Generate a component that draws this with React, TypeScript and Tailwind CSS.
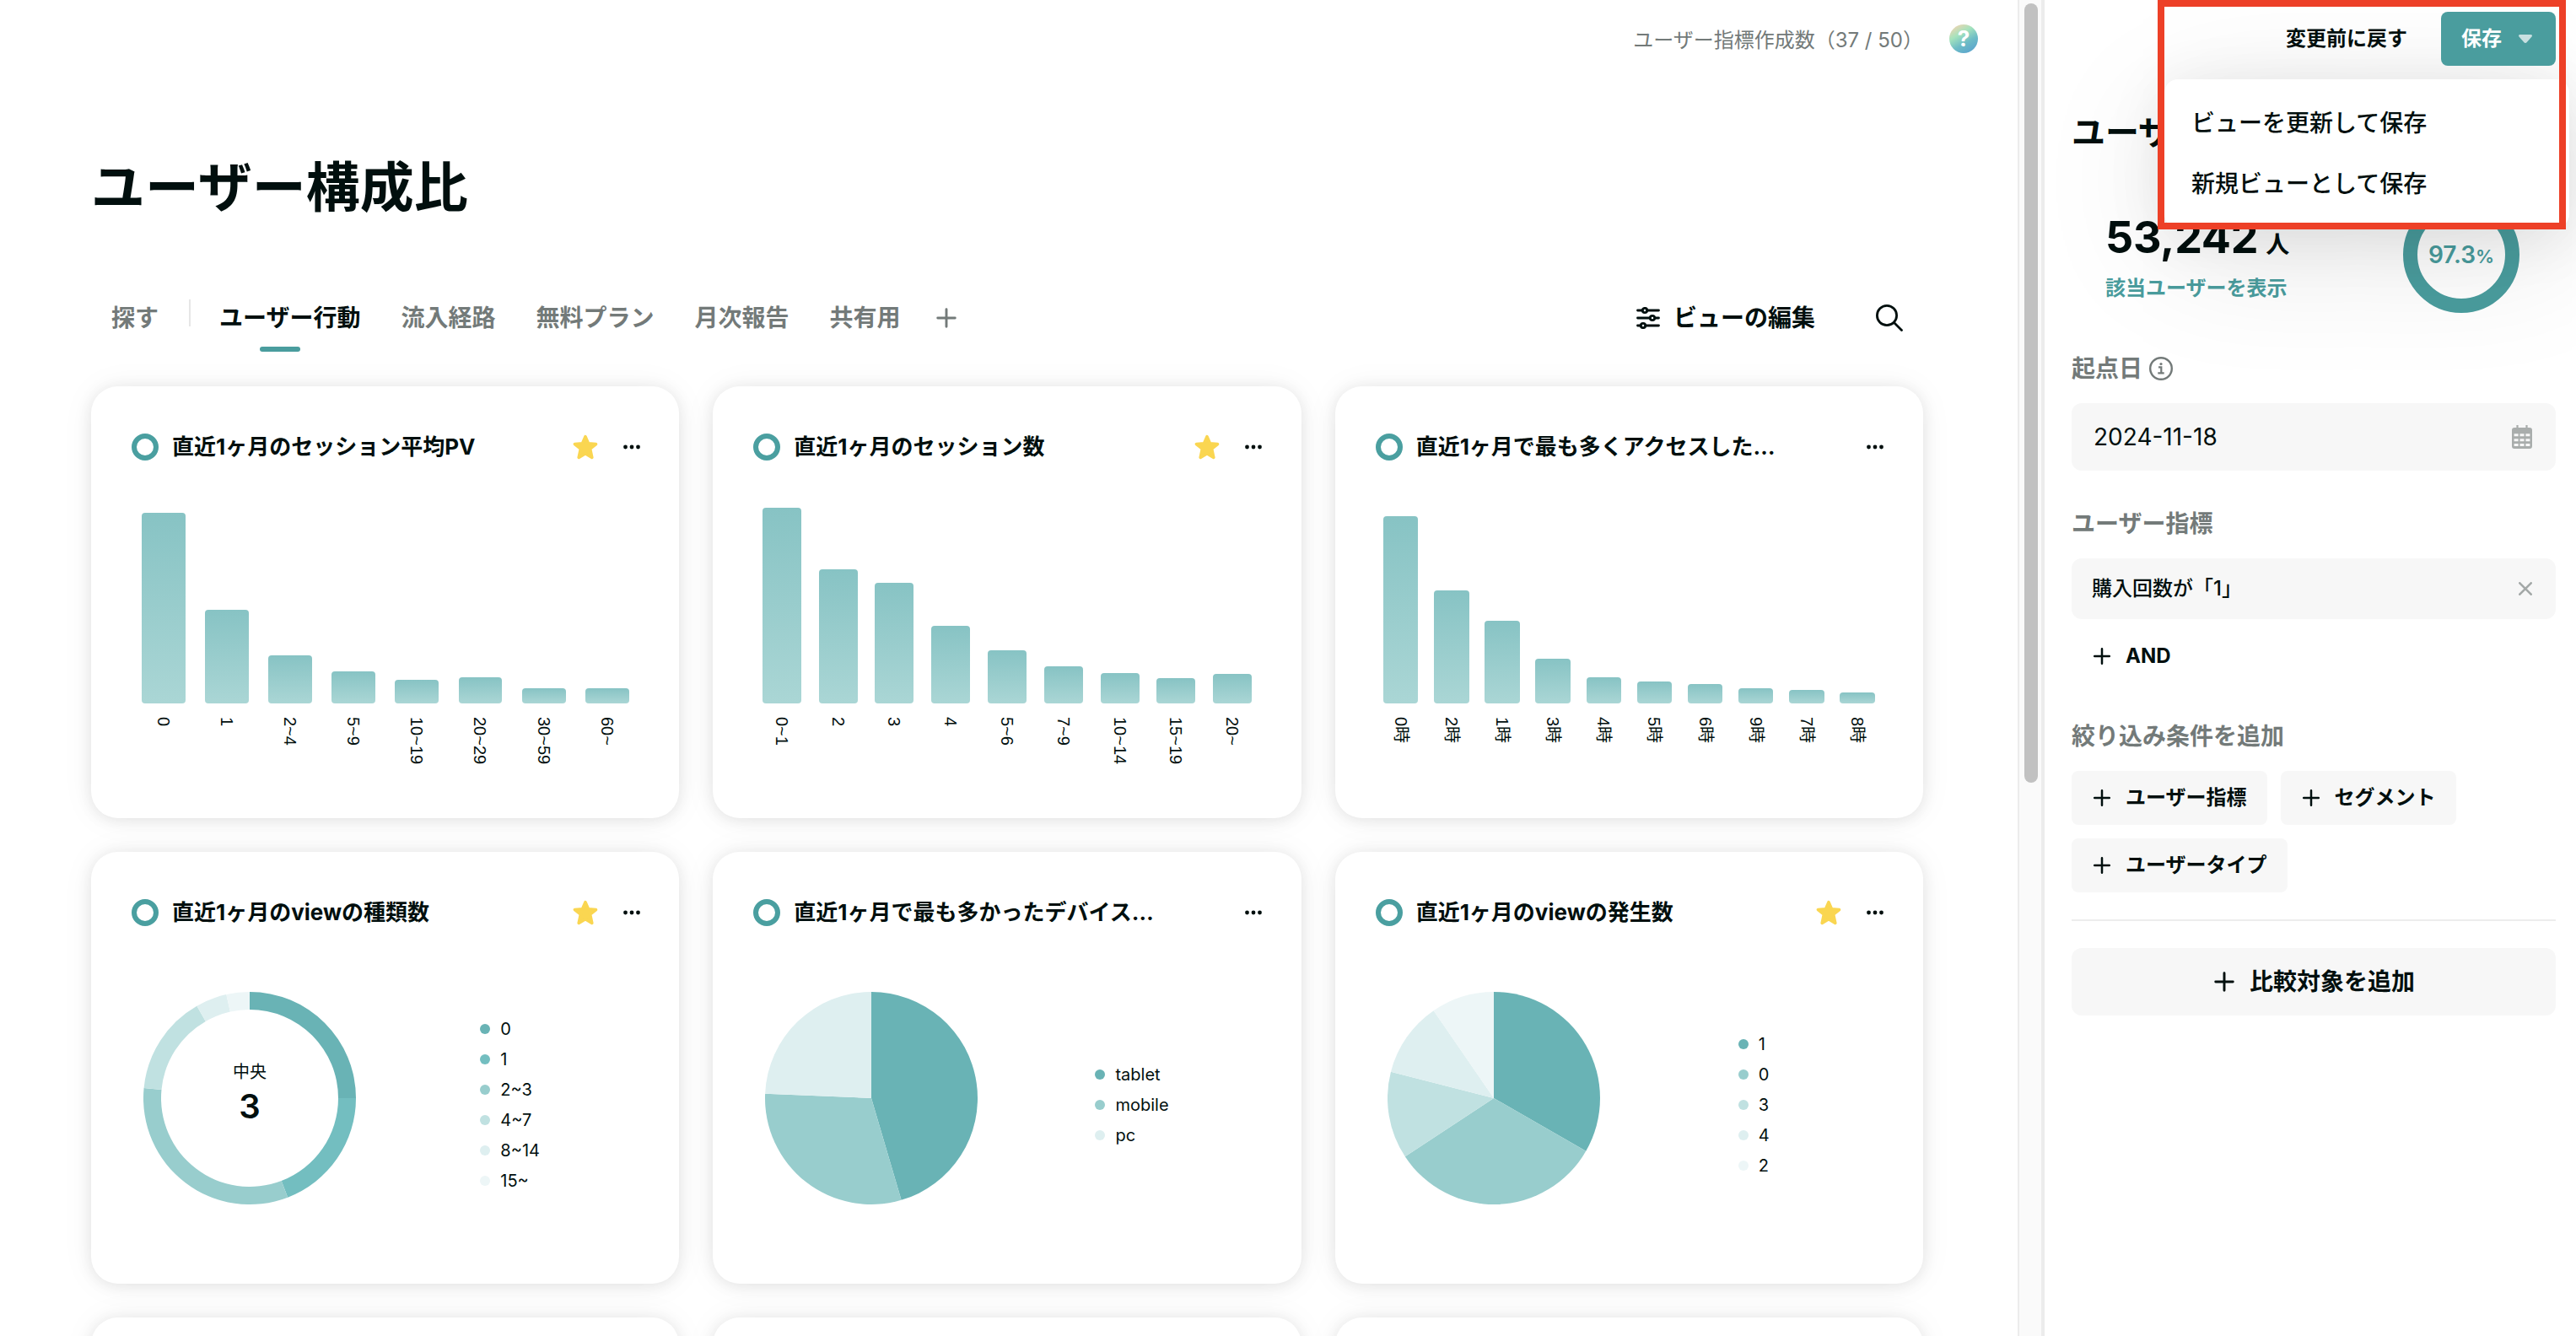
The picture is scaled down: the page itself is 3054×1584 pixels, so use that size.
import type { ReactNode } from "react";

interface Bar {
  label: string;
  height: number;
}

interface Slice {
  label: string;
  to: number;
  color: string;
}

interface MetricCardProps {
  title: string;
  starred?: boolean;
  children: ReactNode;
}

const sessionPv: Bar[] = [
  { label: "0", height: 226 },
  { label: "1", height: 111 },
  { label: "2~4", height: 57 },
  { label: "5~9", height: 38 },
  { label: "10~19", height: 28 },
  { label: "20~29", height: 31 },
  { label: "30~59", height: 18 },
  { label: "60~", height: 18 },
];

const sessionCount: Bar[] = [
  { label: "0~1", height: 232 },
  { label: "2", height: 159 },
  { label: "3", height: 143 },
  { label: "4", height: 92 },
  { label: "5~6", height: 63 },
  { label: "7~9", height: 44 },
  { label: "10~14", height: 36 },
  { label: "15~19", height: 30 },
  { label: "20~", height: 35 },
];

const accessHour: Bar[] = [
  { label: "0時", height: 222 },
  { label: "2時", height: 134 },
  { label: "1時", height: 98 },
  { label: "3時", height: 53 },
  { label: "4時", height: 31 },
  { label: "5時", height: 26 },
  { label: "6時", height: 23 },
  { label: "9時", height: 18 },
  { label: "7時", height: 16 },
  { label: "8時", height: 13 },
];

// `to` is the end angle of each slice, clockwise from 12 o'clock
const viewKinds: Slice[] = [
  { label: "0", to: 90, color: "#69b3b5" },
  { label: "1", to: 159, color: "#73bec0" },
  { label: "2~3", to: 275.5, color: "#98cdcd" },
  { label: "4~7", to: 330.2, color: "#c0e1e1" },
  { label: "8~14", to: 347.3, color: "#deeff0" },
  { label: "15~", to: 360, color: "#edf6f7" },
];

const devices: Slice[] = [
  { label: "tablet", to: 163.6, color: "#69b3b5" },
  { label: "mobile", to: 272.4, color: "#98cdcd" },
  { label: "pc", to: 360, color: "#deeff0" },
];

const viewCount: Slice[] = [
  { label: "1", to: 119.9, color: "#69b3b5" },
  { label: "0", to: 236.6, color: "#98cdcd" },
  { label: "3", to: 284.4, color: "#c0e1e1" },
  { label: "4", to: 325.5, color: "#deeff0" },
  { label: "2", to: 360, color: "#edf6f7" },
];

const tabs = ["流入経路", "無料プラン", "月次報告", "共有用"];

const Plus = ({ className }: { className: string }) => (
  <svg viewBox="0 0 24 24" className={className} fill="none" stroke="currentColor" strokeWidth="2.5" strokeLinecap="round">
    <path d="M12 3.2v17.6M3.2 12h17.6" />
  </svg>
);

const Star = () => (
  <svg viewBox="0 0 30 30" className="h-[30px] w-[30px]" fill="#fad651" stroke="#fad651" strokeWidth="3.6" strokeLinejoin="round">
    <path d="M15 2.6l3.5 8.2 9 .7-6.9 5.7 2.2 10.2L15 22.7l-7.8 4.7 2.2-10.2-6.9-5.7 9-.7z" />
  </svg>
);

const MetricCard = ({ title, starred, children }: MetricCardProps) => (
  <section className="flex h-[512px] flex-col rounded-[32px] bg-white px-12 pt-[52px] shadow-[0_2px_18px_rgba(0,0,0,0.09),0_1px_40px_rgba(0,0,0,0.05)]">
    <div className="flex h-10 items-center">
      <span className="h-8 w-8 shrink-0 rounded-full border-[6.5px] border-[#4a9fa0]" />
      <h2 className="ml-4 flex-1 truncate text-[26px] leading-10 font-bold">{title}</h2>
      {starred && <Star />}
      <svg viewBox="0 0 20 6" className="mr-[-1.5px] ml-[30px] h-1.5 w-5" fill="currentColor">
        <circle cx="2.5" cy="3" r="2.4" />
        <circle cx="10" cy="3" r="2.4" />
        <circle cx="17.5" cy="3" r="2.4" />
      </svg>
    </div>
    {children}
  </section>
);

const BarChart = ({ bars }: { bars: Bar[] }) => (
  <div className="mt-[52px] flex">
    {bars.map((bar) => (
      <div key={bar.label} className="flex flex-1 flex-col items-center">
        <div className="flex h-[232px] w-[69%] items-end">
          <div
            className="w-full rounded-[4px] bg-linear-to-b from-[#87c3c4] to-[#aad6d5]"
            style={{ height: bar.height }}
          />
        </div>
        <span className="mt-4 font-['Liberation_Sans','Noto_Sans_CJK_JP',sans-serif] text-[20px] leading-6 [text-orientation:sideways] [writing-mode:vertical-rl]">
          {bar.label}
        </span>
      </div>
    ))}
  </div>
);

const point = (angle: number, r: number) => {
  const rad = (angle * Math.PI) / 180;
  return `${126 + r * Math.sin(rad)} ${126 - r * Math.cos(rad)}`;
};

const slicePath = (from: number, to: number, inner: number) => {
  const large = to - from > 180 ? 1 : 0;
  return `M${point(from, inner)}L${point(from, 126)}A126 126 0 ${large} 1 ${point(to, 126)}L${point(to, inner)}A${inner} ${inner} 0 ${large} 0 ${point(from, inner)}Z`;
};

const PieChart = ({ slices, inner = 0, children }: { slices: Slice[]; inner?: number; children?: ReactNode }) => (
  <div className="mt-[74px] flex h-[252px] pl-[14px]">
    <div className="relative h-[252px] w-[252px] shrink-0">
      <svg viewBox="0 0 252 252" className="h-full w-full">
        {slices.map((slice, i) => (
          <path key={slice.label} d={slicePath(i ? slices[i - 1].to : 0, slice.to, inner)} fill={slice.color} />
        ))}
      </svg>
      {children}
    </div>
    <div className="ml-[30px] flex flex-1 items-center justify-center pt-4">
      <ul>
        {slices.map((slice) => (
          <li key={slice.label} className="flex h-9 items-center gap-3 text-[20px] leading-9">
            <span className="h-3 w-3 rounded-full" style={{ backgroundColor: slice.color }} />
            {slice.label}
          </li>
        ))}
      </ul>
    </div>
  </div>
);

const AddButton = ({ label }: { label: string }) => (
  <button className="flex h-16 items-center gap-4 rounded-lg bg-[#f7f7f7] px-6 text-[24px] leading-none font-bold">
    <Plus className="h-6 w-6" />
    {label}
  </button>
);

const SideLabel = ({ children }: { children: ReactNode }) => (
  <div className="flex h-10 items-center gap-2 text-[28px] leading-10 font-bold text-[#737a79]">{children}</div>
);

const Sidebar = () => (
  <aside className="relative h-full w-[630px] shrink-0 bg-white pr-6 pl-8">
    <div className="relative z-20 flex h-[92px] items-center justify-end">
      <button className="text-[24px] font-bold">変更前に戻す</button>
      <button className="ml-10 flex h-16 w-[136px] items-center rounded-lg bg-[#4a9d9e] pl-6 text-[24px] font-bold text-white">
        保存
        <svg viewBox="0 0 16 10" className="ml-5 h-2.5 w-4" fill="#c8e0e1">
          <path d="M1.5 0h13a1.4 1.4 0 0 1 1 2.4l-5.7 6.7a2.3 2.3 0 0 1-3.6 0L.5 2.4A1.4 1.4 0 0 1 1.5 0z" />
        </svg>
      </button>
    </div>

    <h2 className="mt-[35px] text-[40px] leading-[60px] font-bold">ユーザー</h2>

    <div className="mt-[46px] flex h-[138px] items-start pr-[43px] pl-10">
      <div className="flex-1 pt-[19px]">
        <div className="flex h-[60px] items-baseline gap-[9px]">
          <span className="text-[52px] leading-[60px] font-bold tracking-[-0.3px]">53,242</span>
          <span className="text-[28px] font-bold">人</span>
        </div>
        <a className="mt-3 block text-[24px] leading-9 font-bold text-[#4a9d9e]">該当ユーザーを表示</a>
      </div>
      <div className="flex h-[138px] w-[138px] items-center justify-center rounded-full border-[17.5px] border-[#4a9d9e] text-[#4a9d9e]">
        <span className="text-[28px] font-semibold">
          97.3<span className="text-[22px]">%</span>
        </span>
      </div>
    </div>

    <div className="mt-[46px]">
      <SideLabel>
        起点日
        <svg viewBox="0 0 28 28" className="h-7 w-7" fill="none" stroke="currentColor" strokeWidth="2.4">
          <circle cx="14" cy="14" r="12.8" />
          <path d="M11 12.4h3.3v7M10.3 19.4h7.4" strokeWidth="2.2" />
          <circle cx="14" cy="8.5" r="1.6" fill="currentColor" stroke="none" />
        </svg>
      </SideLabel>
    </div>
    <div className="mt-[21px] flex h-20 items-center justify-between rounded-xl bg-[#f7f7f7] pr-7 pl-[26px] text-[28px]">
      2024-11-18
      <svg viewBox="0 0 24 28" className="h-7 w-6" fill="#a9adac">
        <path
          fillRule="evenodd"
          d="M5.4 0h2.2v3h8.8V0h2.2v3H21a3 3 0 0 1 3 3v19a3 3 0 0 1-3 3H3a3 3 0 0 1-3-3V6a3 3 0 0 1 3-3h2.4zM2.600 10.300v3h5v-3zm6.900 0v3h5v-3zm6.900 0v3h5v-3zM2.600 16.200v3h5v-3zm6.900 0v3h5v-3zm6.900 0v3h5v-3zM2.600 22.100v3h5v-3zm6.900 0v3h5v-3zm6.900 0v3h5v-3z"
        />
      </svg>
    </div>

    <div className="mt-[43px]">
      <SideLabel>ユーザー指標</SideLabel>
    </div>
    <div className="mt-[21px] flex h-[72px] items-center justify-between rounded-xl bg-[#f7f7f7] pr-7 pl-6 text-[24px] font-medium">
      購入回数が「1」
      <svg viewBox="0 0 16 16" className="h-4 w-4" fill="none" stroke="#a3a8a7" strokeWidth="2.6" strokeLinecap="round">
        <path d="M1.3 1.3l13.4 13.4M14.7 1.3L1.3 14.7" />
      </svg>
    </div>
    <button className="mt-3 flex h-16 items-center gap-4 px-6 text-[24px] font-bold">
      <Plus className="h-6 w-6" />
      AND
    </button>

    <div className="mt-[43px]">
      <SideLabel>絞り込み条件を追加</SideLabel>
    </div>
    <div className="mt-[21px] flex flex-wrap gap-4">
      <AddButton label="ユーザー指標" />
      <AddButton label="セグメント" />
      <AddButton label="ユーザータイプ" />
    </div>

    <hr className="mt-8 border-t-2 border-[#ededed]" />
    <button className="mt-8 flex h-20 w-full items-center justify-center gap-4 rounded-xl bg-[#f7f7f7] text-[28px] font-bold">
      <Plus className="h-7 w-7" />
      比較対象を追加
    </button>

    {/* Save menu */}
    <div className="absolute top-[94px] left-[142px] z-10 w-[480px] rounded-2xl bg-white py-4 shadow-[0_32px_160px_rgba(0,0,0,0.1),0_10px_72px_rgba(0,0,0,0.09)]">
      <div className="flex h-[72px] items-center px-8 text-[28px] font-medium">ビューを更新して保存</div>
      <div className="flex h-[72px] items-center px-8 text-[28px] font-medium">新規ビューとして保存</div>
    </div>
    <div className="absolute top-0 left-[134px] z-30 h-[272px] w-[484px] border-8 border-[#ed4027]" />
  </aside>
);

const App = () => (
  <div className="flex h-[1584px] w-[3054px] overflow-hidden bg-white font-['Inter','Noto_Sans_CJK_JP',sans-serif] text-[#010f0e]">
    <main className="h-full w-[2392px] shrink-0 overflow-hidden">
      <div className="flex h-[92px] items-center justify-end pr-[47px]">
        <span className="pt-[3px] text-[24px] text-[#737a79]">ユーザー指標作成数（37 / 50）</span>
        <span className="ml-[31px] flex h-[34px] w-[34px] items-center justify-center rounded-full bg-[linear-gradient(150deg,#f8d3b0_5%,#a5e3bd_35%,#6dbcc6_62%,#58a0cf_95%)] text-[26px] leading-none font-bold text-white">
          ?
        </span>
      </div>

      <div className="pr-28 pl-[108px]">
        <h1 className="mt-[82px] text-[64px] leading-[96px] font-bold">ユーザー構成比</h1>

        <div className="mt-[67px] flex h-20 items-center text-[28px] font-bold text-[#737a79]">
          <span className="ml-6">探す</span>
          <span className="mb-3 ml-9 h-8 w-0.5 bg-[#e6e6e6]" />
          <span className="relative ml-[34px] text-[#010f0e]">
            ユーザー行動
            <span className="absolute -bottom-[19px] left-12 h-1.5 w-12 rounded-full bg-[#4a9d9e]" />
          </span>
          {tabs.map((tab) => (
            <span key={tab} className="ml-12">
              {tab}
            </span>
          ))}
          <Plus className="ml-10 h-7 w-7" />
          <div className="ml-auto flex items-center pr-6 text-[#010f0e]">
            <svg viewBox="0 0 28 26" className="h-[26px] w-7" fill="none" stroke="currentColor" strokeWidth="2.8" strokeLinecap="round">
              <path d="M1.5 4H7M13 4h13.5M1.5 13H16M22 13h4.5M1.5 22H5M11 22h15.5" />
              <circle cx="10" cy="4" r="2.7" />
              <circle cx="19" cy="13" r="2.7" />
              <circle cx="8" cy="22" r="2.7" />
            </svg>
            <span className="ml-4">ビューの編集</span>
            <svg viewBox="0 0 32 32" className="ml-[72px] h-8 w-8" fill="none" stroke="currentColor" strokeWidth="2.8" strokeLinecap="round">
              <circle cx="13" cy="13" r="11.6" />
              <path d="M21.5 21.5l9 9" />
            </svg>
          </div>
        </div>

        <div className="mt-[41px] grid grid-cols-3 gap-10">
          <MetricCard title="直近1ヶ月のセッション平均PV" starred>
            <BarChart bars={sessionPv} />
          </MetricCard>
          <MetricCard title="直近1ヶ月のセッション数" starred>
            <BarChart bars={sessionCount} />
          </MetricCard>
          <MetricCard title="直近1ヶ月で最も多くアクセスした…">
            <BarChart bars={accessHour} />
          </MetricCard>
          <MetricCard title="直近1ヶ月のviewの種類数" starred>
            <PieChart slices={viewKinds} inner={105}>
              <div className="absolute inset-0 flex flex-col items-center justify-center pb-3">
                <span className="text-[20px] leading-8">中央</span>
                <span className="text-[40px] leading-[50px] font-semibold">3</span>
              </div>
            </PieChart>
          </MetricCard>
          <MetricCard title="直近1ヶ月で最も多かったデバイス…">
            <PieChart slices={devices} />
          </MetricCard>
          <MetricCard title="直近1ヶ月のviewの発生数" starred>
            <PieChart slices={viewCount} />
          </MetricCard>
          {/* Next row, only its top edge is on screen */}
          {[0, 1, 2].map((i) => (
            <div
              key={i}
              className="h-[512px] rounded-[32px] bg-white shadow-[0_2px_18px_rgba(0,0,0,0.09),0_1px_40px_rgba(0,0,0,0.05)]"
            />
          ))}
        </div>
      </div>
    </main>

    <div className="h-full w-8 shrink-0 border-r-4 border-l-2 border-[#ececec] bg-[#fafafa] pt-1 pl-1.5">
      <div className="h-[924px] w-4 rounded-full bg-[#c1c1c1]" />
    </div>

    <Sidebar />
  </div>
);

export default App;
